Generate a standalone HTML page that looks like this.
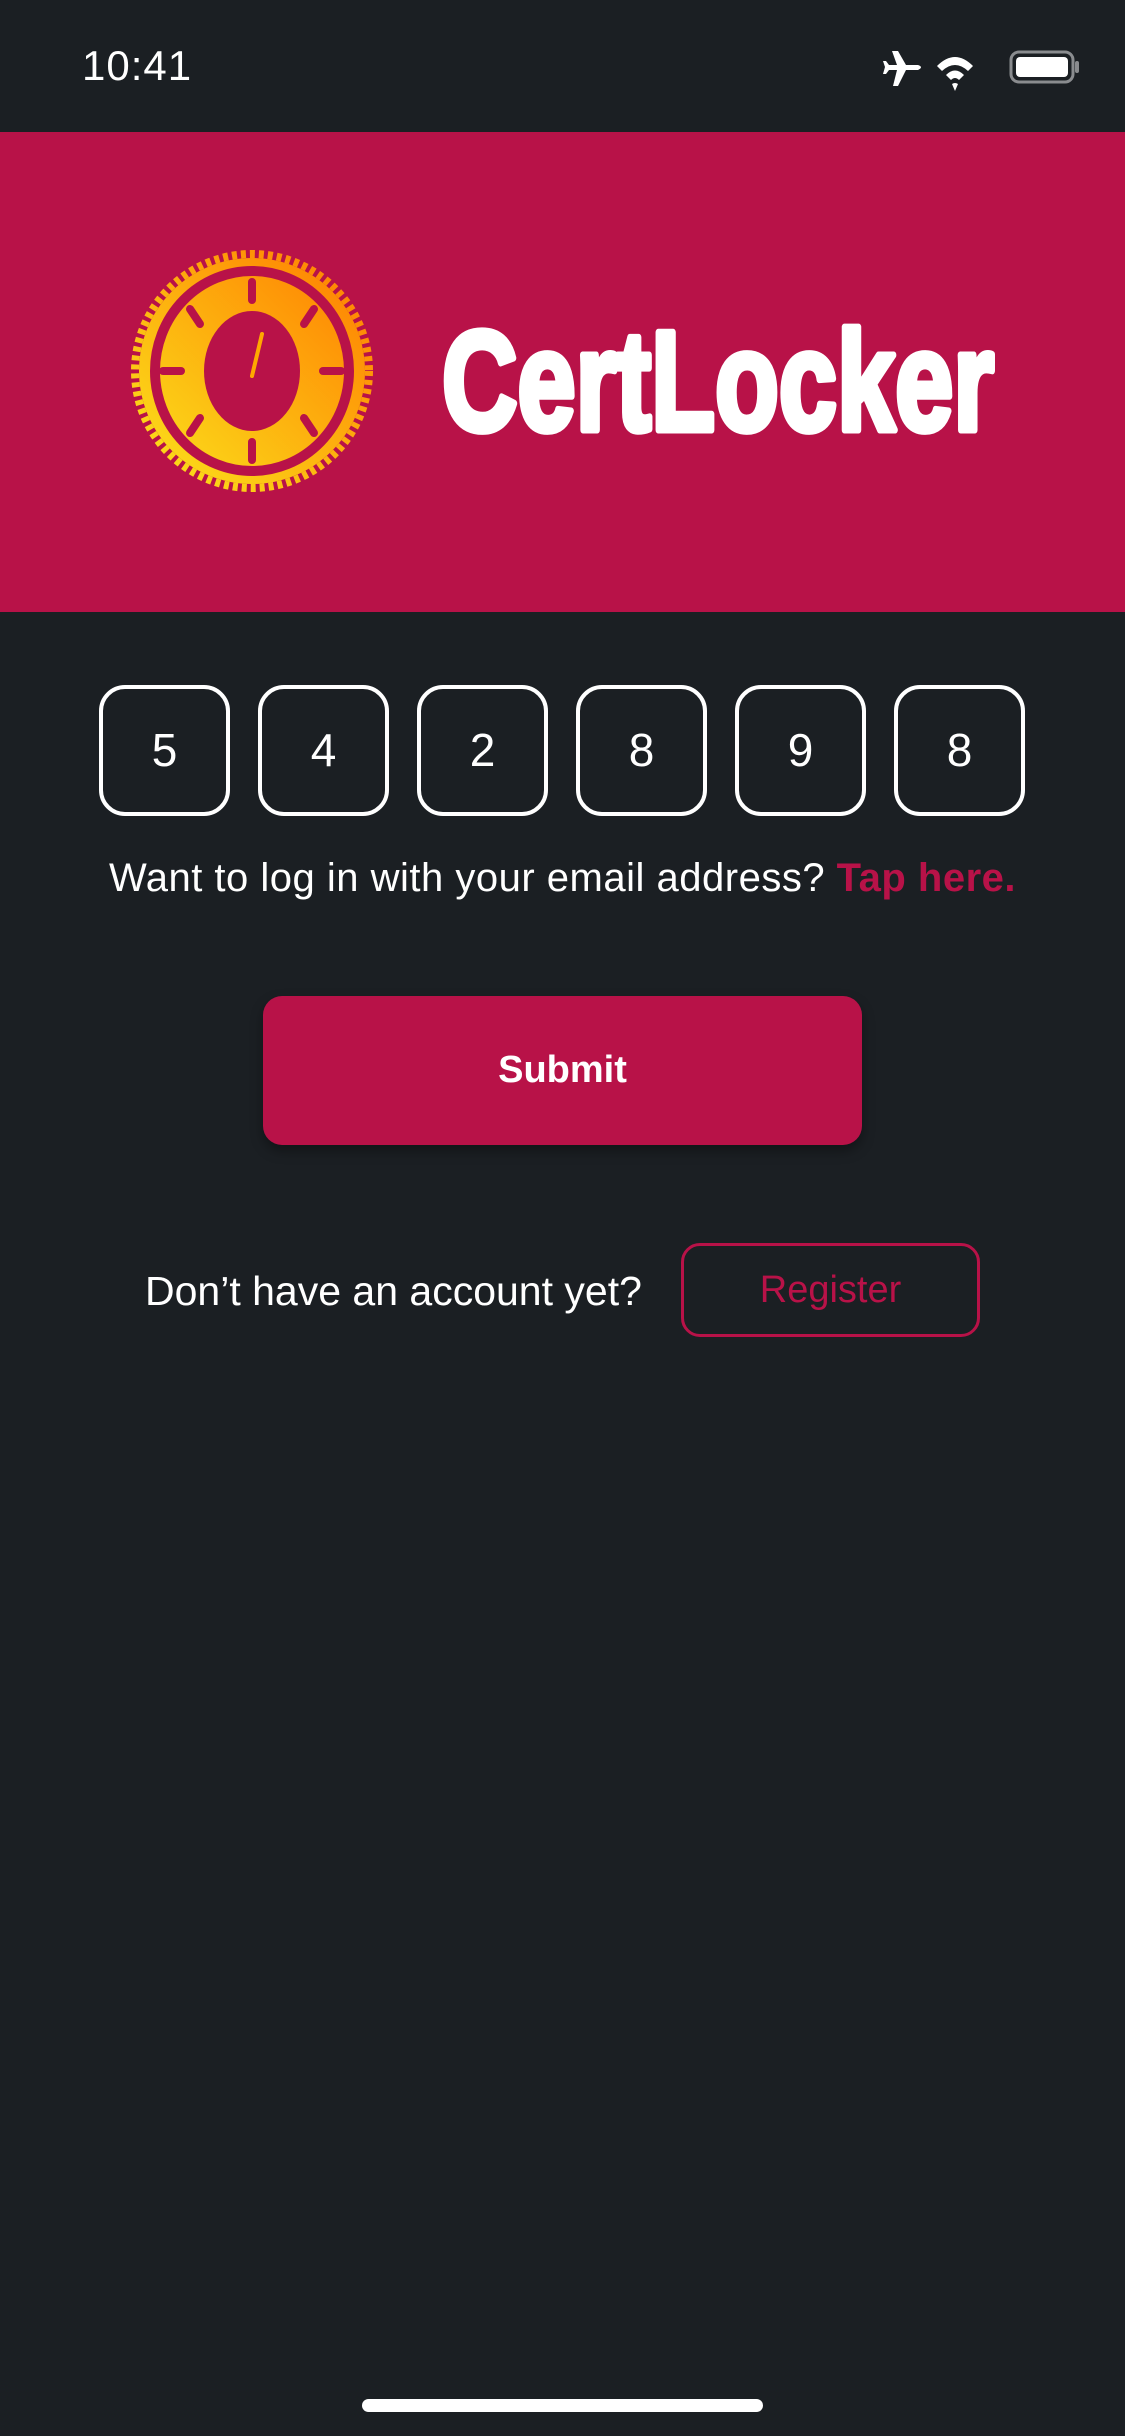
<!DOCTYPE html>
<html><head><meta charset="utf-8">
<style>
html,body{margin:0;padding:0;}
body{width:1125px;height:2436px;background:#1b1f23;position:relative;overflow:hidden;font-family:"Liberation Sans",sans-serif;color:#fff;}
.abs{position:absolute;}
.box{position:absolute;top:685px;width:123px;height:123px;border:4px solid #fff;border-radius:26px;text-align:center;line-height:123px;font-size:46px;color:#fff;}
</style></head><body>
<div class="abs" style="left:82px;top:42px;font-size:42px;font-weight:normal;letter-spacing:1px;">10:41</div>
<svg class="abs" style="left:880px;top:46px" width="210" height="50" viewBox="0 0 210 50">
 <path d="M12 5 L18 5 L26 19 L38 19 Q44 21 38 24 L26 24 L18 40 L13 40 L17 24 L9 24 L6 28 L3 28 L5 21 L3 15 L6 15 L9 19 L17 19 Z" fill="#fff"/>
 <path d="M57 20 Q75 2 93 20 L88 25 Q75 13 62 25 Z M66 29 Q75 20 84 29 L79 34 Q75 30 71 34 Z M75 45 L72 38 Q75 36 78 38 Z" fill="#fff"/>
 <rect x="131" y="6" width="62" height="30" rx="8" fill="none" stroke="#8a8c8f" stroke-width="3"/>
 <rect x="136" y="11" width="52" height="20" rx="4" fill="#fff"/>
 <rect x="195" y="15" width="4" height="12" rx="2" fill="#8a8c8f"/>
</svg>
<div class="abs" style="left:0;top:132px;width:1125px;height:480px;background:#b81248;"></div>
<svg class="abs" style="left:0;top:132px" width="1125" height="480" viewBox="0 0 1125 480">
 <defs><linearGradient id="sealg" gradientUnits="userSpaceOnUse" x1="140" y1="360" x2="370" y2="120"><stop offset="0" stop-color="#fbe41c"/><stop offset="1" stop-color="#ff7a00"/></linearGradient></defs>
 <circle cx="252" cy="239" r="113" fill="url(#sealg)"/>
 <circle cx="252" cy="239" r="117" fill="none" stroke="url(#sealg)" stroke-width="8" stroke-dasharray="5 4"/>
 <ellipse cx="252" cy="239" rx="97" ry="100" fill="none" stroke="#b81248" stroke-width="10"/>
 <g stroke="#b81248" stroke-width="8" stroke-linecap="round">
  <line x1="252" y1="150" x2="252" y2="168"/><line x1="252" y1="310" x2="252" y2="328"/>
  <line x1="163" y1="239" x2="181" y2="239"/><line x1="323" y1="239" x2="341" y2="239"/>
  <line x1="190" y1="177" x2="200" y2="192"/><line x1="314" y1="177" x2="304" y2="192"/>
  <line x1="190" y1="301" x2="200" y2="286"/><line x1="314" y1="301" x2="304" y2="286"/>
 </g>
 <ellipse cx="252" cy="239" rx="48" ry="60" fill="#b81248"/>
 <line x1="252" y1="244" x2="262" y2="202" stroke="#ffa800" stroke-width="4" stroke-linecap="round"/>
 <text x="442" y="298" textLength="552" lengthAdjust="spacingAndGlyphs" font-family="Liberation Sans, sans-serif" font-weight="bold" font-size="142" fill="#fff" stroke="#fff" stroke-width="7" stroke-linejoin="round">CertLocker</text>
</svg>
<div class="box" style="left:99px">5</div>
<div class="box" style="left:258px">4</div>
<div class="box" style="left:417px">2</div>
<div class="box" style="left:576px">8</div>
<div class="box" style="left:735px">9</div>
<div class="box" style="left:894px">8</div>
<div class="abs" style="left:0;width:1125px;top:856px;text-align:center;font-size:40px;letter-spacing:0.5px;white-space:nowrap;">Want to log in with your email address? <b style="color:#b81248">Tap here.</b></div>
<div class="abs" style="left:263px;top:996px;width:599px;height:149px;background:#b81248;border-radius:19px;box-shadow:0 6px 12px rgba(0,0,0,0.35);text-align:center;line-height:149px;font-size:38px;font-weight:bold;">Submit</div>
<div class="abs" style="left:145px;top:1268px;font-size:41px;white-space:nowrap;">Don’t have an account yet?</div>
<div class="abs" style="left:681px;top:1243px;width:293px;height:88px;border:3px solid #b81248;border-radius:19px;text-align:center;line-height:88px;font-size:38px;color:#b81248;">Register</div>
<div class="abs" style="left:362px;top:2399px;width:401px;height:13px;border-radius:7px;background:#fff;"></div>
</body></html>
